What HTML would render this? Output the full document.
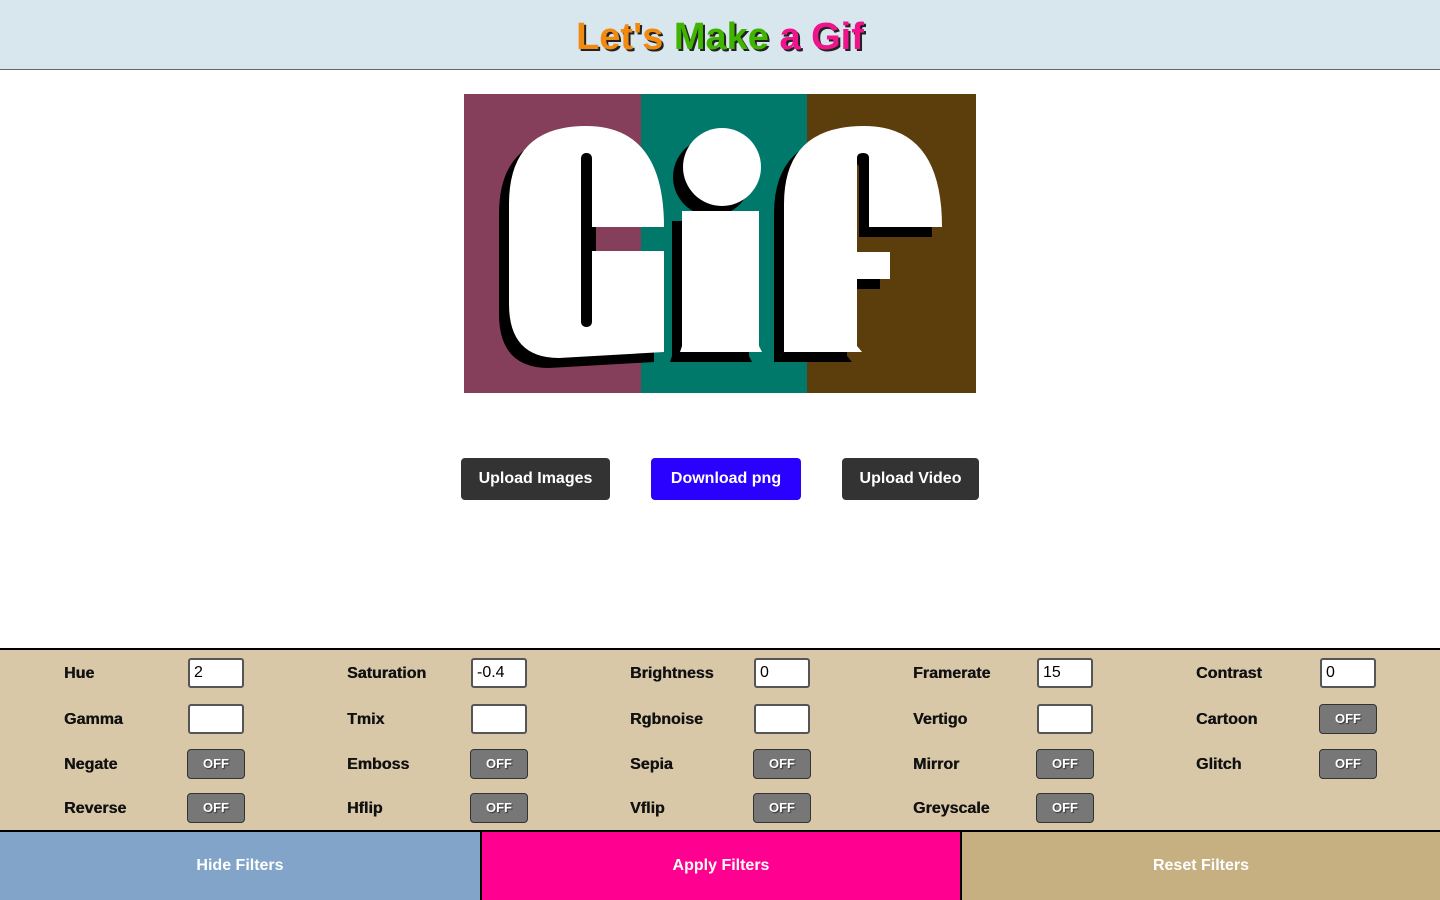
<!DOCTYPE html>
<html><head><style>
*{margin:0;padding:0;box-sizing:border-box}
body{width:1440px;height:900px;overflow:hidden;background:#fff;font-family:"Liberation Sans",sans-serif;position:relative}
.hdr{position:absolute;left:0;top:0;width:1440px;height:70px;background:#d8e6ee;border-bottom:1px solid #666;text-align:center}
.hdr h1{font-size:38px;font-weight:900;line-height:74px;letter-spacing:0px;text-shadow:2px 2px 0 #222}
.img{position:absolute;left:464px;top:94px;width:512px;height:299px}
.btn{position:absolute;top:458px;height:42px;border-radius:4px;color:#fff;font-weight:bold;font-size:16px;text-align:center;line-height:42px;background:#333}
.panel{position:absolute;left:0;top:648px;width:1440px;height:184px;background:#d8c8a8;border-top:2px solid #000;border-bottom:2px solid #000}
.lbl{position:absolute;font-weight:bold;font-size:16px;color:#111;text-shadow:0.4px 0 0 #111}
.inp{position:absolute;width:56px;height:30px;background:#fff;border:2px solid #555;border-radius:3px;font-size:16px;padding-left:4px;line-height:26px}
.off{position:absolute;width:58px;height:30px;background:#777;border:1px solid #333;border-radius:4px;color:#fff;font-weight:bold;font-size:13px;text-align:center;line-height:28px;text-shadow:1px 1px 1px #333}
.ft{position:absolute;top:832px;height:68px;width:480px;color:#fff;font-weight:bold;font-size:16px;text-align:center;line-height:68px}
</style></head><body>
<div class="hdr"><h1><span style="color:#f08a10">Let's</span> <span style="color:#3fb500">Make</span> <span style="color:#f0148c">a Gif</span></h1></div>
<svg class="img" viewBox="0 0 512 299" width="512" height="299">
<rect x="0" y="0" width="177" height="299" fill="#853f5a"/>
<rect x="177" y="0" width="166" height="299" fill="#00786a"/>
<rect x="343" y="0" width="169" height="299" fill="#5c3d0c"/>
<defs>
<g id="L">
<path d="M45,110 Q45,32 122,32 Q200,32 200,133 L128,133 L128,157 L200,157 L200,258 L95,264 Q45,264 45,210 Z"/>
<circle cx="258" cy="73" r="39"/>
<path d="M218,117 L295,117 L295,252 L298,258 L216,258 L218,252 Z"/>
<path d="M320,258 L320,110 Q320,32 400,32 Q478,32 478,133 L405,133 L405,64 Q405,59 399,59 Q393,59 393,64 L393,158 L426,158 L426,185 L393,185 L393,252 L398,258 Z"/>
</g>
</defs>
<use href="#L" transform="translate(-10,10)" fill="#000"/>
<use href="#L" fill="#fff"/>
<rect x="117" y="59" width="11" height="174" rx="5" fill="#000"/>
<rect x="128" y="133" width="73" height="24" fill="#853f5a"/>
<rect x="177" y="133" width="24" height="24" fill="#00786a"/>
<rect x="120" y="133" width="12" height="24" fill="#000"/>
</svg>
<div class="btn" style="left:461px;width:149px">Upload Images</div>
<div class="btn" style="left:651px;width:150px;background:#2a00ff">Download png</div>
<div class="btn" style="left:842px;width:137px">Upload Video</div>
<div class="panel"></div>
<div class="lbl" style="left:64px;top:665px">Hue</div><div class="inp" style="left:188px;top:658px">2</div>
<div class="lbl" style="left:347px;top:665px">Saturation</div><div class="inp" style="left:471px;top:658px">-0.4</div>
<div class="lbl" style="left:630px;top:665px">Brightness</div><div class="inp" style="left:754px;top:658px">0</div>
<div class="lbl" style="left:913px;top:665px">Framerate</div><div class="inp" style="left:1037px;top:658px">15</div>
<div class="lbl" style="left:1196px;top:665px">Contrast</div><div class="inp" style="left:1320px;top:658px">0</div>
<div class="lbl" style="left:64px;top:711px">Gamma</div><div class="inp" style="left:188px;top:704px"></div>
<div class="lbl" style="left:347px;top:711px">Tmix</div><div class="inp" style="left:471px;top:704px"></div>
<div class="lbl" style="left:630px;top:711px">Rgbnoise</div><div class="inp" style="left:754px;top:704px"></div>
<div class="lbl" style="left:913px;top:711px">Vertigo</div><div class="inp" style="left:1037px;top:704px"></div>
<div class="lbl" style="left:1196px;top:711px">Cartoon</div><div class="off" style="left:1319px;top:704px">OFF</div>
<div class="lbl" style="left:64px;top:756px">Negate</div><div class="off" style="left:187px;top:749px">OFF</div>
<div class="lbl" style="left:347px;top:756px">Emboss</div><div class="off" style="left:470px;top:749px">OFF</div>
<div class="lbl" style="left:630px;top:756px">Sepia</div><div class="off" style="left:753px;top:749px">OFF</div>
<div class="lbl" style="left:913px;top:756px">Mirror</div><div class="off" style="left:1036px;top:749px">OFF</div>
<div class="lbl" style="left:1196px;top:756px">Glitch</div><div class="off" style="left:1319px;top:749px">OFF</div>
<div class="lbl" style="left:64px;top:800px">Reverse</div><div class="off" style="left:187px;top:793px">OFF</div>
<div class="lbl" style="left:347px;top:800px">Hflip</div><div class="off" style="left:470px;top:793px">OFF</div>
<div class="lbl" style="left:630px;top:800px">Vflip</div><div class="off" style="left:753px;top:793px">OFF</div>
<div class="lbl" style="left:913px;top:800px">Greyscale</div><div class="off" style="left:1036px;top:793px">OFF</div>
<div class="ft" style="left:0;background:#81a4c8">Hide Filters</div>
<div class="ft" style="left:480px;background:#ff0090;border-left:2px solid #000">Apply Filters</div>
<div class="ft" style="left:960px;background:#c6b081;border-left:2px solid #000">Reset Filters</div>
</body></html>
